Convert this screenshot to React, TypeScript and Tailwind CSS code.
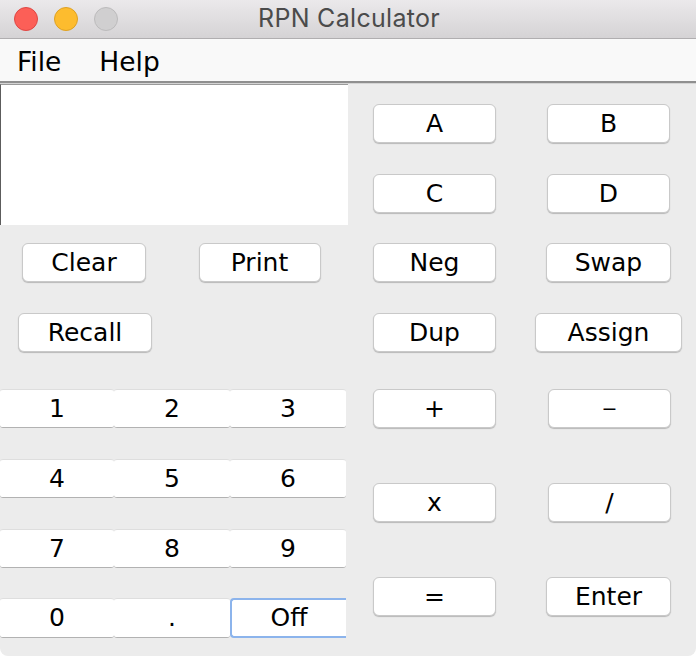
import React from "react";

const F = { fontFamily: '"DejaVu Sans", "Liberation Sans", sans-serif' };

function Btn({ label, w, small }: { label: string; w: string; small?: boolean }) {
  return (
    <div
      className={`${w} h-[39px] bg-white rounded-[6px] border border-[#c9c9c9] shadow-[0_1px_1px_rgba(0,0,0,0.22)] flex items-center justify-center ${small ? "text-[19px]" : "text-[25px]"} leading-none text-black`}
      style={F}
    >
      <span className="-mt-[1px]">{label}</span>
    </div>
  );
}

function Num({ label, focus, h }: { label: string; focus?: boolean; h: string }) {
  return (
    <div
      className={
        focus
          ? `${h} bg-white rounded-l-[4px] border-t-2 border-b-2 border-l-2 border-[#8cb4ec] flex items-center justify-center text-[25px] leading-none text-black`
          : `${h} bg-white rounded-[3px] border-t border-[#dedede] border-b border-b-[#b2b2b2] flex items-center justify-center text-[25px] leading-none text-black`
      }
      style={F}
    >
      <span className="-mt-[1px]">{label}</span>
    </div>
  );
}

function Row({ children, mt }: { children: React.ReactNode; mt: string }) {
  return <div className={`grid grid-cols-2 ${mt}`}>{children}</div>;
}

export default function App() {
  return (
    <div className="w-[696px] h-[656px] bg-[#ececec] overflow-hidden flex flex-col rounded-b-[8px]">
      {/* title bar */}
      <div className="h-[39px] shrink-0 bg-gradient-to-b from-[#ebe9eb] to-[#d5d3d5] border-b border-[#b0aeb0] grid grid-cols-[1fr_auto_1fr] items-center">
        <div className="flex items-center gap-[16px] pl-[14px]">
          <div className="w-[24px] h-[24px] rounded-full bg-[#fc5f57] border border-[#df4744]" />
          <div className="w-[24px] h-[24px] rounded-full bg-[#fdbc2e] border border-[#dea123]" />
          <div className="w-[24px] h-[24px] rounded-full bg-[#d0cfd0] border border-[#bcbbbc]" />
        </div>
        <div
          className="text-[25px] text-[#4b4b4b] leading-none -mt-[2px] pl-[2px] tracking-[0.3px]"
          style={{ fontFamily: 'Inter, "Liberation Sans", sans-serif' }}
        >
          RPN Calculator
        </div>
        <div />
      </div>
      {/* menu bar */}
      <div
        className="h-[42px] shrink-0 bg-[#f9f9f9] flex items-center gap-[38px] pl-[17px] pt-[5px] text-[26.5px] text-black leading-none"
        style={F}
      >
        <span>File</span>
        <span>Help</span>
      </div>
      <div className="h-[2px] shrink-0 bg-[#8f8f8f]" />
      <div className="h-[1px] shrink-0 bg-[#d4d4d4]" />

      {/* body */}
      <div className="flex flex-1">
        {/* left */}
        <div className="w-[346px] shrink-0 flex flex-col">
          <div className="h-[141px] bg-white border-l border-[#5c5c5c] border-t border-t-[#9a9a9a] mr-[-2px]" />
          <Row mt="mt-[18px]">
            <div className="flex justify-center pr-[5px]">
              <Btn label="Clear" w="w-[124px]" />
            </div>
            <div className="flex justify-center">
              <Btn label="Print" w="w-[122px]" />
            </div>
          </Row>
          <Row mt="mt-[31px]">
            <div className="flex justify-center pr-[3px]">
              <Btn label="Recall" w="w-[134px]" />
            </div>
            <div />
          </Row>
          <div className="flex flex-col mt-[37px]">
            <div className="grid grid-cols-[114px_116px_116px]">
              <Num label="1" h="h-[39px]" />
              <Num label="2" h="h-[39px]" />
              <Num label="3" h="h-[39px]" />
            </div>
            <div className="grid grid-cols-[114px_116px_116px] mt-[31px]">
              <Num label="4" h="h-[39px]" />
              <Num label="5" h="h-[39px]" />
              <Num label="6" h="h-[39px]" />
            </div>
            <div className="grid grid-cols-[114px_116px_116px] mt-[31px]">
              <Num label="7" h="h-[39px]" />
              <Num label="8" h="h-[39px]" />
              <Num label="9" h="h-[39px]" />
            </div>
            <div className="grid grid-cols-[114px_116px_116px] mt-[30px]">
              <Num label="0" h="h-[40px]" />
              <Num label="." h="h-[40px]" />
              <Num label="Off" h="h-[40px]" focus />
            </div>
          </div>
        </div>

        {/* right */}
        <div className="flex-1 flex flex-col pt-[20px]">
          <Row mt="mt-0">
            <div className="flex justify-center pl-[2px]">
              <Btn label="A" w="w-[123px]" />
            </div>
            <div className="flex justify-center">
              <Btn label="B" w="w-[123px]" />
            </div>
          </Row>
          <Row mt="mt-[31px]">
            <div className="flex justify-center pl-[2px]">
              <Btn label="C" w="w-[123px]" />
            </div>
            <div className="flex justify-center">
              <Btn label="D" w="w-[123px]" />
            </div>
          </Row>
          <Row mt="mt-[30px]">
            <div className="flex justify-center pl-[2px]">
              <Btn label="Neg" w="w-[123px]" />
            </div>
            <div className="flex justify-center">
              <Btn label="Swap" w="w-[125px]" />
            </div>
          </Row>
          <Row mt="mt-[31px]">
            <div className="flex justify-center pl-[2px]">
              <Btn label="Dup" w="w-[123px]" />
            </div>
            <div className="flex justify-center">
              <Btn label="Assign" w="w-[147px]" />
            </div>
          </Row>
          <Row mt="mt-[37px]">
            <div className="flex justify-center pl-[2px]">
              <Btn label="+" w="w-[123px]" />
            </div>
            <div className="flex justify-center pl-[2px]">
              <Btn label="−" w="w-[123px]" small />
            </div>
          </Row>
          <Row mt="mt-[55px]">
            <div className="flex justify-center pl-[2px]">
              <Btn label="x" w="w-[123px]" />
            </div>
            <div className="flex justify-center pl-[2px]">
              <Btn label="/" w="w-[123px]" />
            </div>
          </Row>
          <Row mt="mt-[55px]">
            <div className="flex justify-center pl-[2px]">
              <Btn label="=" w="w-[123px]" />
            </div>
            <div className="flex justify-center">
              <Btn label="Enter" w="w-[125px]" />
            </div>
          </Row>
        </div>
      </div>
    </div>
  );
}
